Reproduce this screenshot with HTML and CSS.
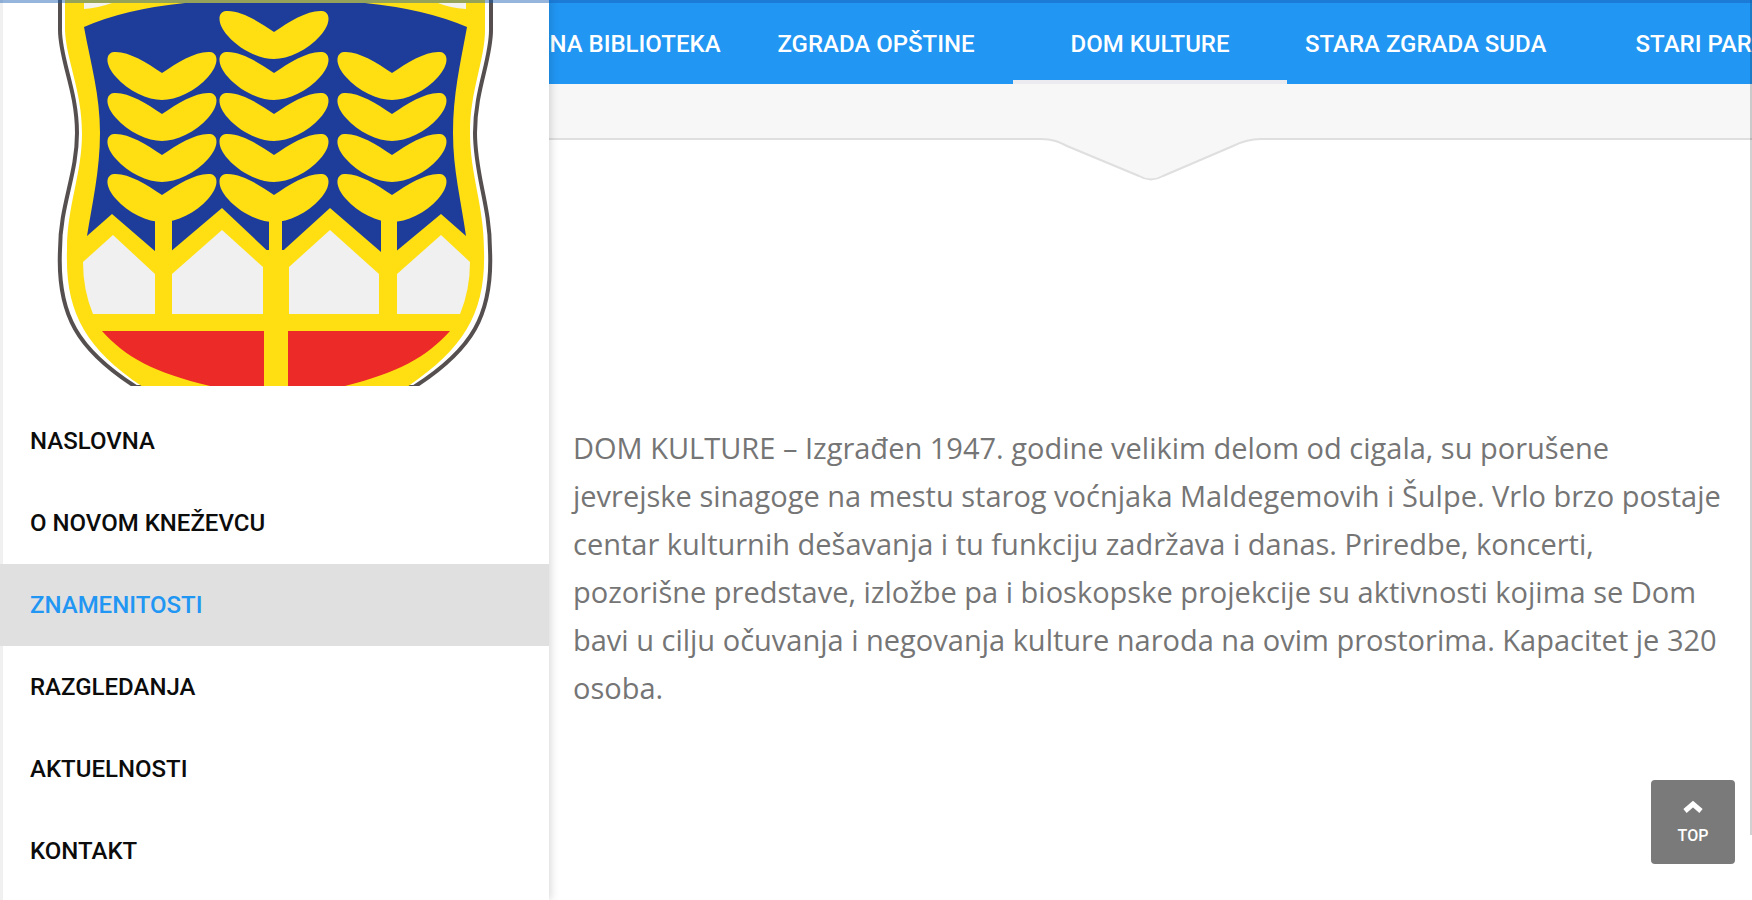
FILE: index.html
```html
<!DOCTYPE html>
<html lang="sr-Latn">
<head>
<meta charset="utf-8">
<meta name="viewport" content="width=device-width, initial-scale=1">
<title>Dom kulture</title>
<link rel="stylesheet" href="styles.css">
</head>
<body>
<div class="status-strip"></div>
<div class="layout">
  <aside class="sidebar">
    <svg class="crest" viewBox="0 0 549 386" role="img" aria-label="Grb">
      <defs>
        <path id="leaf" d="M0,0 C-16,-11 -34,-22 -48,-21 C-57,-20 -57,-8 -46,4 C-34,18 -14,27 0,27 C14,27 34,18 46,4 C57,-8 57,-20 48,-21 C34,-22 16,-11 0,0Z"/>
      </defs>
      <path d="M60,-5 V30 C60,60 77,90 77,133 C77,175 60,205 60,250 C57,315 78,350 136,387 H414 C472,350 493,315 490,250 C490,205 475,175 475,133 C475,90 491,60 491,30 V-5Z" fill="#fff" stroke="#55504f" stroke-width="4"/>
      <path d="M65,-5 V30 C66,60 82,90 82,133 C82,175 67,205 67,250 C65,312 85,348 143,387 H407 C465,348 486,312 484,250 C484,205 470,175 470,133 C470,90 485,60 485,30 V-5Z" fill="#ffdf12"/>
      <path d="M84,3 L84,9 Q98,8 112,3Z M466,3 V9 Q450,8 438,3Z" fill="#f4f3ee"/>
      <path d="M84,27 Q125,9 185,3 H365 Q425,9 467,27 C460,65 453,95 453,133 C453,170 461,200 466,236 L441,214 L388,258 L330,208 L275,258 L222,208 L163,258 L112,214 L87,236 C92,205 100,170 100,133 C100,95 91,65 84,27Z" fill="#1e3d9b"/>
      <g fill="#ffdf12">
        <path d="M155,212h17v110h-17zM269,212h13v45h-13zM265,250h22v136h-22zM381,212h16v110h-16z"/>
        <use href="#leaf" x="162" y="73"/><use href="#leaf" x="162" y="114"/><use href="#leaf" x="162" y="155"/><use href="#leaf" x="162" y="195"/>
        <use href="#leaf" x="274" y="32"/><use href="#leaf" x="274" y="73"/><use href="#leaf" x="274" y="114"/><use href="#leaf" x="274" y="155"/><use href="#leaf" x="274" y="195"/>
        <use href="#leaf" x="392" y="73"/><use href="#leaf" x="392" y="114"/><use href="#leaf" x="392" y="155"/><use href="#leaf" x="392" y="195"/>
      </g>
      <path d="M83,262 L113,235 L155,274 V314 H93 Q83,290 83,262Z M172,274 L222,230 L263,267 V314 H172Z M289,267 L330,230 L379,274 V314 H289Z M397,274 L441,235 L470,262 Q470,290 460,314 H397Z" fill="#f0f0f1"/>
      <path d="M102,331 H264 V386 H210 C155,373 125,357 102,331Z M288,331 H450 C427,357 397,373 345,386 H288Z" fill="#ec2a27"/>
    </svg>
    <nav class="menu" aria-label="Glavni meni">
      <a class="menu-item" href="#">NASLOVNA</a>
      <a class="menu-item" href="#">O NOVOM KNEŽEVCU</a>
      <a class="menu-item is-active" href="#" aria-current="page">ZNAMENITOSTI</a>
      <a class="menu-item" href="#">RAZGLEDANJA</a>
      <a class="menu-item" href="#">AKTUELNOSTI</a>
      <a class="menu-item" href="#">KONTAKT</a>
    </nav>
  </aside>
  <main class="content">
    <nav class="tabs" aria-label="Znamenitosti">
      <a class="tab tab-first" href="#">NA BIBLIOTEKA</a>
      <a class="tab" href="#">ZGRADA OPŠTINE</a>
      <a class="tab is-active" href="#" aria-current="true">DOM KULTURE</a>
      <a class="tab" href="#">STARA ZGRADA SUDA</a>
      <a class="tab" href="#">STARI PARK</a>
    </nav>
    <div class="divider">
      <svg class="divider-arrow" viewBox="0 0 220 46" aria-hidden="true">
        <path d="M0,0 V2 C12,2 18,5 26,9 L98,39 Q110,46 122,39 L192,9 C200,5 208,2 220,2 V0Z" fill="#f7f7f7"/>
        <path d="M0,2 C12,2 18,5 26,9 L98,39 Q110,46 122,39 L192,9 C200,5 208,2 220,2" fill="none" stroke="#dfdfdf" stroke-width="2"/>
      </svg>
    </div>
    <p class="text">DOM KULTURE – Izgrađen 1947. godine velikim delom od cigala, su porušene jevrejske sinagoge na mestu starog voćnjaka Maldegemovih i Šulpe. Vrlo brzo postaje centar kulturnih dešavanja i tu funkciju zadržava i danas. Priredbe, koncerti, pozorišne predstave, izložbe pa i bioskopske projekcije su aktivnosti kojima se Dom bavi u cilju očuvanja i negovanja kulture naroda na ovim prostorima. Kapacitet je 320 osoba.</p>
  </main>
</div>
<div class="scroll-thumb"></div>
<button class="top-button" type="button">
  <svg class="top-icon" viewBox="0 0 20 14" aria-hidden="true"><path d="M2,11 L10,4 L18,11" fill="none" stroke="#fff" stroke-width="5"/></svg>
  TOP
</button>
</body>
</html>
```
FILE: styles.css
```css
* { box-sizing: border-box; }

body {
  margin: 0;
  background: #fff;
  font-family: Roboto, "Liberation Sans", sans-serif;
  overflow: hidden;
}

a { text-decoration: none; }

.status-strip {
  position: absolute;
  z-index: 3;
  top: 0;
  left: 0;
  right: 0;
  height: 3px;
  background: rgba(20, 92, 180, 0.45);
}

.layout {
  display: flex;
  min-height: 100vh;
}

.sidebar {
  position: relative;
  z-index: 2;
  flex: none;
  width: 549px;
  background: #fff;
  box-shadow: inset 3px 0 0 #f0f0f0, 2px 0 8px rgba(0, 0, 0, 0.15);
}

.crest {
  display: block;
  width: 100%;
}

.menu {
  display: flex;
  flex-direction: column;
  padding-top: 14px;
}

.menu-item {
  padding: 0 30px;
  color: #0c0c0c;
  font-size: 24px;
  font-weight: 500;
  line-height: 82px;
}

.menu-item.is-active {
  background: #e0e0e0;
  color: #2196f3;
}

.content {
  flex: 1;
  min-width: 0;
}

.tabs {
  display: flex;
  height: 84px;
  overflow: hidden;
  background: #2196f3;
  box-shadow: 0 1px 4px rgba(0, 0, 0, 0.25);
}

.tab {
  flex: none;
  min-width: 274px;
  padding: 0 18px;
  color: #fff;
  font-size: 24px;
  font-weight: 500;
  line-height: 88px;
  text-align: center;
  white-space: nowrap;
}

.tab-first {
  min-width: 190px;
  padding-left: 0;
}

.tab.is-active {
  height: 84px;
  box-shadow: inset 0 -4px 0 #ebebf0;
}

.divider {
  position: relative;
  height: 56px;
  background: #f7f7f7;
  border-bottom: 2px solid #dfdfdf;
}

.divider-arrow {
  position: absolute;
  top: 53px;
  left: calc(50% - 110px);
  width: 220px;
}

.text {
  margin: 0;
  padding: 284px 24px 0;
  color: #757575;
  font-family: "Open Sans", "Liberation Sans", sans-serif;
  font-size: 29px;
  line-height: 48px;
}

.scroll-thumb {
  position: fixed;
  z-index: 2;
  top: 0;
  right: 0;
  width: 2px;
  height: 835px;
  background: rgba(0, 0, 0, 0.18);
}

.top-button {
  position: fixed;
  right: 17px;
  bottom: 36px;
  display: flex;
  flex-direction: column;
  align-items: center;
  justify-content: center;
  gap: 12px;
  width: 84px;
  height: 84px;
  padding: 0;
  border: 0;
  border-radius: 4px;
  background: #7a7a7a;
  color: #fff;
  font-family: Roboto, "Liberation Sans", sans-serif;
  font-size: 16px;
  font-weight: 500;
}

.top-icon {
  width: 20px;
  height: 14px;
}
```
